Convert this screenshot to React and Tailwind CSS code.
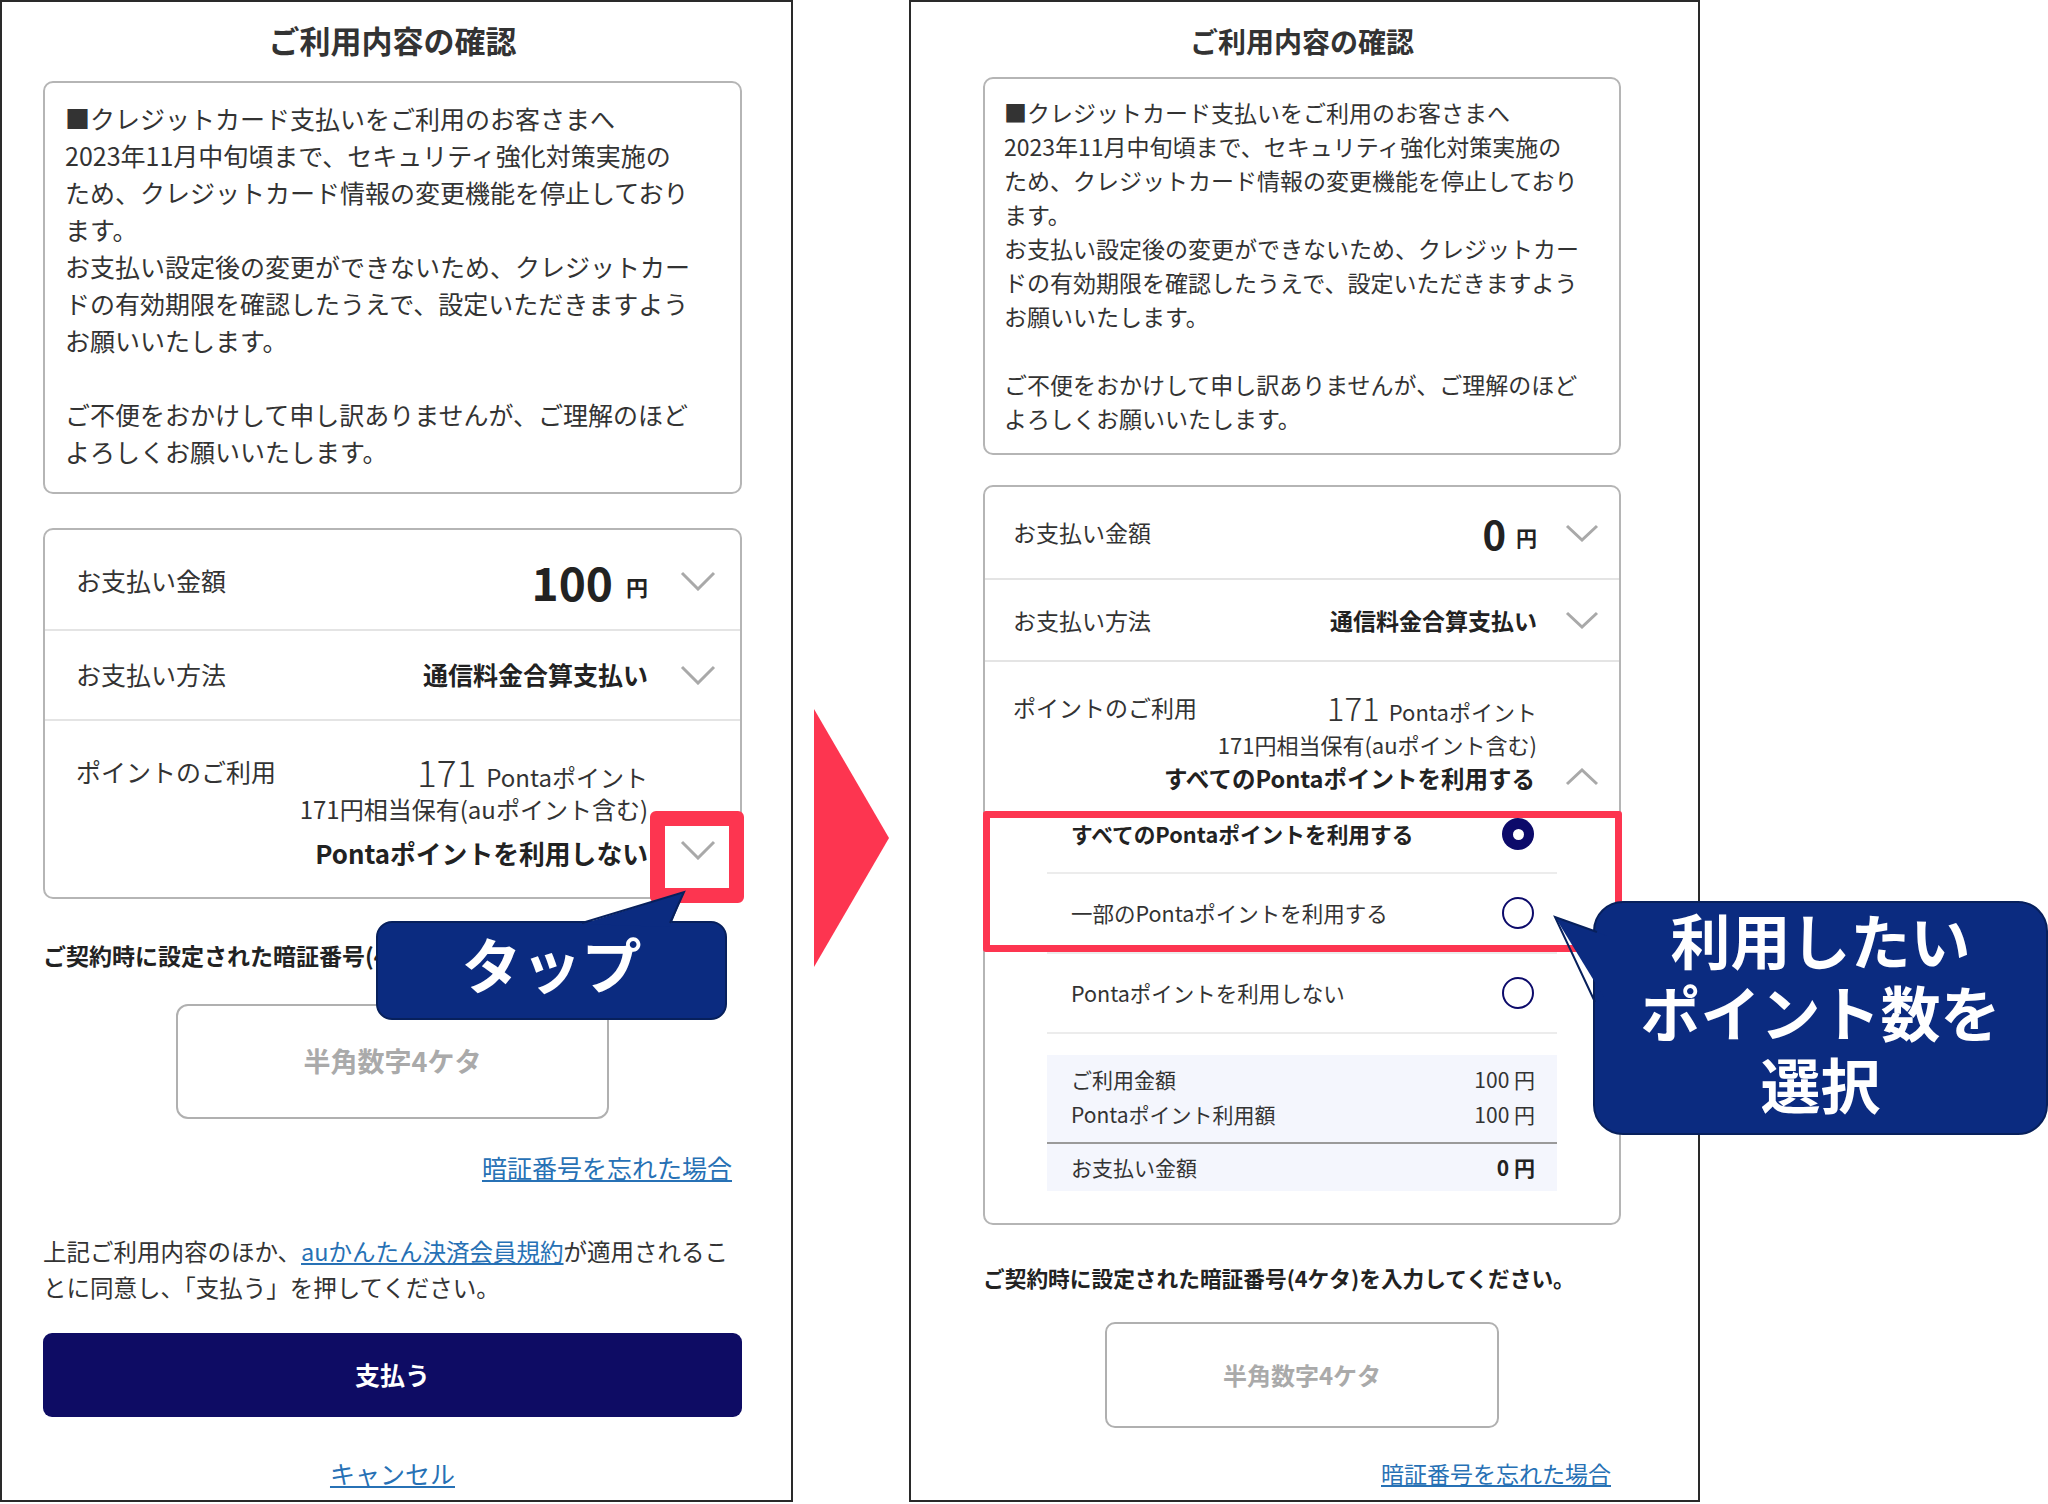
import React from "react";

function ChevronDown({ w = 36, h = 20 }) {
  return (
    <svg width={w} height={h} viewBox={`0 0 ${w} ${h}`} className="shrink-0">
      <polyline points={`2,2 ${w / 2},${h - 2} ${w - 2},2`} fill="none" stroke="#a9a9a9" strokeWidth="3" />
    </svg>
  );
}

function ChevronUp({ w = 34, h = 18 }) {
  return (
    <svg width={w} height={h} viewBox={`0 0 ${w} ${h}`} className="shrink-0">
      <polyline points={`2,${h - 2} ${w / 2},2 ${w - 2},${h - 2}`} fill="none" stroke="#a9a9a9" strokeWidth="3" />
    </svg>
  );
}

function Radio({ on }) {
  return on ? (
    <div className="w-[32px] h-[32px] rounded-full bg-[#0c0a6a] flex items-center justify-center shrink-0">
      <div className="w-[11px] h-[11px] rounded-full bg-white" />
    </div>
  ) : (
    <div className="w-[32px] h-[32px] rounded-full border-2 border-[#0c0a6a] shrink-0" />
  );
}

const notice = [
  "■クレジットカード支払いをご利用のお客さまへ",
  "2023年11月中旬頃まで、セキュリティ強化対策実施の",
  "ため、クレジットカード情報の変更機能を停止しており",
  "ます。",
  "お支払い設定後の変更ができないため、クレジットカー",
  "ドの有効期限を確認したうえで、設定いただきますよう",
  "お願いいたします。",
  "",
  "ご不便をおかけして申し訳ありませんが、ご理解のほど",
  "よろしくお願いいたします。",
];

function LeftPhone() {
  return (
    <div className="w-[793px] h-[1502px] border-2 border-[#2a2a2a] shrink-0 flex flex-col pl-[41px] pr-[49px] text-[#333]">
      <h1 className="mt-[18px] h-[40px] leading-[40px] text-center text-[31px] font-bold">ご利用内容の確認</h1>

      <div className="mt-[21px] h-[413px] border-2 border-[#b5b5b5] rounded-[10px] pt-[17px] pl-[20px] text-[25px] leading-[37px]">
        {notice.map((l, i) => (
          <div key={i} className="h-[37px] whitespace-nowrap">{l}</div>
        ))}
      </div>

      <div className="mt-[34px] h-[371px] border-2 border-[#b5b5b5] rounded-[10px] flex flex-col">
        <div className="h-[101px] border-b-2 border-[#e4e4e4] flex items-center pl-[31px] pr-[24px] pt-[2px]">
          <span className="flex-1 min-w-0 text-[25px]">お支払い金額</span>
          <span className="text-[46px] font-bold text-[#222] leading-[52px]">100</span>
          <span className="ml-[13px] text-[22px] font-bold text-[#222] mt-[12px]">円</span>
          <div className="ml-[32px]"><ChevronDown /></div>
        </div>
        <div className="h-[90px] border-b-2 border-[#e4e4e4] flex items-center pl-[31px] pr-[24px]">
          <span className="flex-1 min-w-0 text-[25px]">お支払い方法</span>
          <span className="text-[25px] font-bold text-[#222]">通信料金合算支払い</span>
          <div className="ml-[32px]"><ChevronDown /></div>
        </div>
        <div className="flex pl-[31px] pr-[24px] pt-[31px]">
          <div className="flex-1 min-w-0 h-[38px] leading-[38px] text-[25px] whitespace-nowrap">ポイントのご利用</div>
          <div className="flex flex-col items-end">
            <div className="h-[38px] flex items-baseline whitespace-nowrap mr-[68px]">
              <span className="text-[37px] font-light leading-[38px]">171</span>
              <span className="ml-[10px] text-[24px] leading-[38px]">Pontaポイント</span>
            </div>
            <div className="h-[38px] leading-[38px] text-[24px] whitespace-nowrap mr-[68px]">171円相当保有(auポイント含む)</div>
            <div className="h-[50px] flex items-center">
              <span className="text-[25.8px] font-semibold text-[#222] whitespace-nowrap">Pontaポイントを利用しない</span>
              <div className="ml-[32px] mb-[6px]"><ChevronDown /></div>
            </div>
          </div>
        </div>
      </div>

      <div className="mt-[40px] h-[32px] leading-[32px] text-[23px] font-bold text-[#222] whitespace-nowrap">
        ご契約時に設定された暗証番号(4ケタ)を入力してください。
      </div>

      <div className="mt-[33px] self-center w-[433px] h-[115px] border-2 border-[#b0b0b0] rounded-[12px] flex items-center justify-center text-[27px] font-bold text-[#aaa]">
        半角数字4ケタ
      </div>

      <a className="mt-[31px] self-end mr-[10px] h-[34px] leading-[34px] text-[25px] text-[#2771b5] underline">暗証番号を忘れた場合</a>

      <p className="mt-[49px] text-[23.5px] leading-[36px] whitespace-nowrap">
        上記ご利用内容のほか、<a className="text-[#2771b5] underline">auかんたん決済会員規約</a>が適用されるこ
        <br />
        とに同意し、「支払う」を押してください。
      </p>

      <button className="mt-[28px] h-[84px] w-full rounded-[9px] bg-[#0e0c64] text-white text-[25px] font-bold">支払う</button>

      <a className="mt-[39px] self-center h-[34px] leading-[34px] text-[25px] text-[#2771b5] underline">キャンセル</a>
    </div>
  );
}

function RightPhone() {
  return (
    <div className="ml-[20px] w-[791px] h-[1502px] border-2 border-[#2a2a2a] shrink-0 flex flex-col pl-[72px] pr-[77px] text-[#333]">
      <h1 className="mt-[20px] h-[38px] leading-[38px] text-center text-[28px] font-bold">ご利用内容の確認</h1>

      <div className="mt-[17px] h-[378px] border-2 border-[#b5b5b5] rounded-[10px] pt-[16px] pl-[19px] text-[23px] leading-[34px]">
        {notice.map((l, i) => (
          <div key={i} className="h-[34px] whitespace-nowrap">{l}</div>
        ))}
      </div>

      <div className="mt-[30px] h-[740px] border-2 border-[#b5b5b5] rounded-[10px] flex flex-col">
        <div className="h-[93px] border-b-2 border-[#e4e4e4] flex items-center pl-[28px] pr-[20px]">
          <span className="flex-1 min-w-0 text-[23px]">お支払い金額</span>
          <span className="text-[40px] font-bold text-[#222] leading-[46px]">0</span>
          <span className="ml-[10px] text-[21px] font-bold text-[#222] mt-[10px]">円</span>
          <div className="ml-[28px]"><ChevronDown w={34} h={18} /></div>
        </div>
        <div className="h-[82px] border-b-2 border-[#e4e4e4] flex items-center pl-[28px] pr-[20px]">
          <span className="flex-1 min-w-0 text-[23px]">お支払い方法</span>
          <span className="text-[23px] font-bold text-[#222]">通信料金合算支払い</span>
          <div className="ml-[28px]"><ChevronDown w={34} h={18} /></div>
        </div>
        <div className="flex pl-[28px] pr-[20px] pt-[26px]">
          <div className="flex-1 min-w-0 h-[38px] leading-[38px] text-[23px] whitespace-nowrap">ポイントのご利用</div>
          <div className="flex flex-col items-end shrink-0">
            <div className="h-[38px] flex items-baseline whitespace-nowrap mr-[62px]">
              <span className="text-[33px] font-light leading-[38px]">171</span>
              <span className="ml-[9px] text-[22px] leading-[38px]">Pontaポイント</span>
            </div>
            <div className="h-[36px] leading-[36px] text-[22px] whitespace-nowrap mr-[62px]">171円相当保有(auポイント含む)</div>
            <div className="h-[34px] flex items-center">
              <span className="text-[23.5px] font-bold text-[#222] whitespace-nowrap">すべてのPontaポイントを利用する</span>
              <div className="ml-[30px] mb-[4px]"><ChevronUp /></div>
            </div>
          </div>
        </div>

        <div className="mx-[62px] flex flex-col">
          <div className="h-[78px] border-b-2 border-[#ececec] flex items-center pl-[24px] pr-[23px]">
            <span className="flex-1 text-[21.7px] font-bold text-[#222]">すべてのPontaポイントを利用する</span>
            <Radio on />
          </div>
          <div className="h-[80px] border-b-2 border-[#ececec] flex items-center pl-[24px] pr-[23px]">
            <span className="flex-1 text-[21.5px]">一部のPontaポイントを利用する</span>
            <Radio />
          </div>
          <div className="h-[80px] border-b-2 border-[#ececec] flex items-center pl-[24px] pr-[23px]">
            <span className="flex-1 text-[21.5px]">Pontaポイントを利用しない</span>
            <Radio />
          </div>

          <div className="mt-[21px] h-[136px] bg-[#f4f6fd] flex flex-col pt-[7px] text-[21px]">
            <div className="h-[35px] flex items-center pl-[24px] pr-[22px]">
              <span className="flex-1">ご利用金額</span>
              <span>100 円</span>
            </div>
            <div className="h-[35px] flex items-center pl-[24px] pr-[22px]">
              <span className="flex-1">Pontaポイント利用額</span>
              <span>100 円</span>
            </div>
            <div className="mt-[10px] h-[2px] bg-[#9a9a9a]" />
            <div className="h-[47px] flex items-center pl-[24px] pr-[22px]">
              <span className="flex-1">お支払い金額</span>
              <span className="font-bold text-[#222]">0 円</span>
            </div>
          </div>
        </div>
      </div>

      <div className="mt-[38px] h-[30px] leading-[30px] text-[21.7px] font-bold text-[#222] whitespace-nowrap">
        ご契約時に設定された暗証番号(4ケタ)を入力してください。
      </div>

      <div className="mt-[29px] self-center w-[394px] h-[106px] border-2 border-[#b0b0b0] rounded-[10px] flex items-center justify-center text-[24px] font-bold text-[#aaa]">
        半角数字4ケタ
      </div>

      <a className="mt-[30px] self-end mr-[10px] h-[30px] leading-[30px] text-[23px] text-[#2771b5] underline">暗証番号を忘れた場合</a>
    </div>
  );
}

export default function App() {
  return (
    <div className="relative w-[2048px] h-[1504px] bg-white overflow-hidden flex items-start font-['Noto_Sans_CJK_JP','Noto_Sans',sans-serif]">
      <LeftPhone />

      <div className="ml-[21px] mt-[709px] shrink-0">
        <svg width="75" height="258" viewBox="0 0 75 258">
          <polygon points="0,0 75,129 0,258" fill="#fd3550" />
        </svg>
      </div>

      <RightPhone />

      {/* left highlight */}
      <div className="absolute left-[650px] top-[811px] w-[94px] h-[92px] border-[15px] border-[#fd3550] rounded-[6px]" />

      {/* left callout */}
      <div className="absolute left-[376px] top-[921px] w-[351px] h-[99px] rounded-[16px] bg-[#0b2b80] border-2 border-[#07205c] flex items-center justify-center pb-[16px] text-white text-[60px] font-bold leading-[70px]">
        タップ
      </div>
      <svg className="absolute left-[578px] top-[889px]" width="112" height="40" viewBox="0 0 112 40">
        <polygon points="4,35 106,3 92,38" fill="#0b2b80" />
        <polyline points="4,34 106,3 92,34" fill="none" stroke="#07205c" strokeWidth="2" />
      </svg>

      {/* right highlight */}
      <div className="absolute left-[983px] top-[811px] w-[639px] h-[141px] border-[7px] border-[#fd3550] rounded-[3px]" />

      {/* right callout */}
      <div className="absolute left-[1593px] top-[901px] w-[455px] h-[234px] rounded-[30px] bg-[#0b2b80] border-2 border-[#07205c] flex flex-col items-center justify-center pb-[14px] text-white text-[60px] font-bold leading-[72px]">
        <div>利用したい</div>
        <div>ポイント数を</div>
        <div>選択</div>
      </div>
      <svg className="absolute left-[1553px] top-[914px]" width="56" height="94" viewBox="0 0 56 94">
        <polygon points="2,3 54,22 54,88" fill="#0b2b80" />
        <polyline points="44,18 2,3 42,88" fill="none" stroke="#07205c" strokeWidth="2" />
      </svg>
    </div>
  );
}
